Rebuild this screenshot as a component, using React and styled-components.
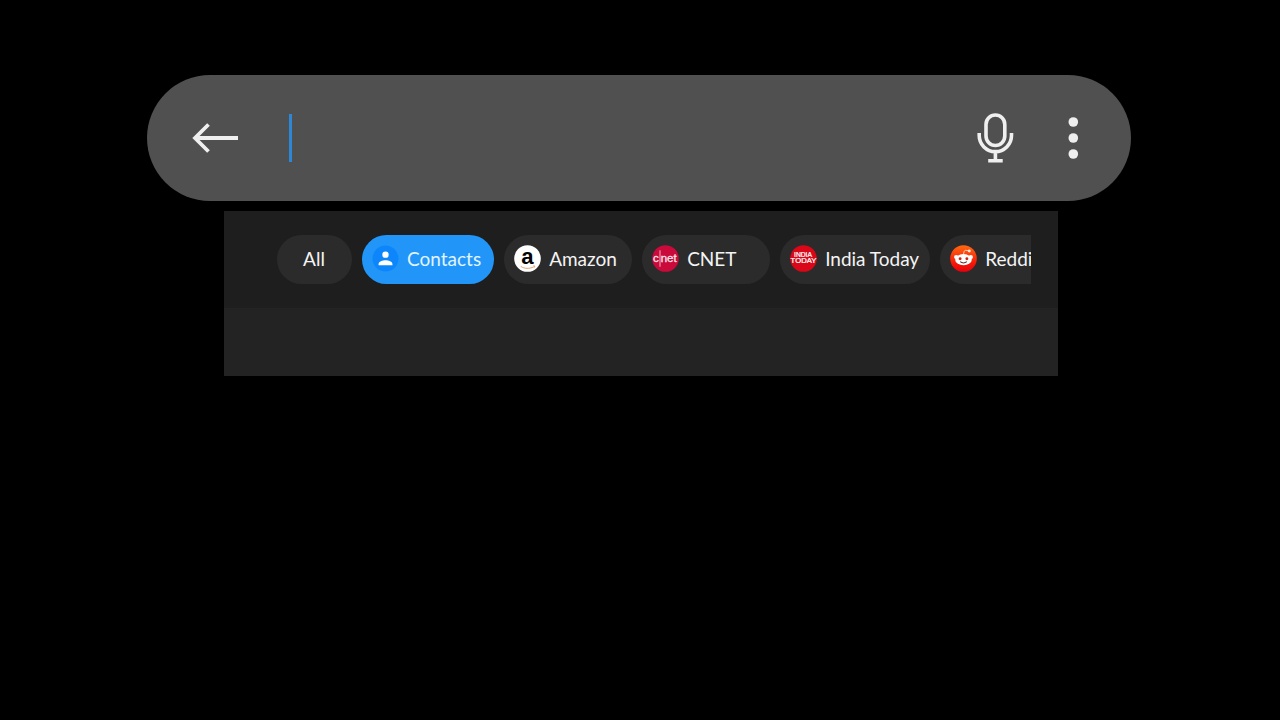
import React, { useState } from 'react';
import styled, { createGlobalStyle } from 'styled-components';

const GlobalStyle = createGlobalStyle`
  * {
    box-sizing: border-box;
  }

  body {
    margin: 0;
    background: #000;
    font-family: Lato, 'Liberation Sans', sans-serif;
  }
`;

const Page = styled.main`
  padding: 75px 0;
`;

const SearchBar = styled.form`
  display: flex;
  align-items: center;
  height: 126px;
  margin: 0 149px 10px 147px;
  padding: 0 52px 0 45px;
  border-radius: 63px;
  background: #505050;
`;

const IconButton = styled.button`
  display: flex;
  flex-shrink: 0;
  padding: 0;
  border: 0;
  background: transparent;
  color: #efefef;
  cursor: pointer;
`;

const Field = styled.label`
  display: flex;
  flex: 1;
  align-items: center;
  height: 48px;
  margin: 0 24px 0 49px;
`;

const Caret = styled.span`
  width: 3px;
  height: 48px;
  background: #2e86d6;
`;

const SearchInput = styled.input`
  flex: 1;
  min-width: 0;
  padding: 0 8px;
  border: 0;
  outline: 0;
  background: transparent;
  color: #efefef;
  caret-color: transparent;
  font: inherit;
  font-size: 32px;
`;

const Actions = styled.div`
  display: flex;
  align-items: center;
  gap: 53px;
`;

const Panel = styled.section`
  margin: 0 222px 0 224px;
  background: #232323;
`;

const Filters = styled.div`
  padding: 24px 27px 24px 53px;
  background: #1e1e1e;
`;

const ChipRow = styled.div`
  display: flex;
  gap: 10px;
  overflow: hidden;
`;

const Chip = styled.button`
  display: flex;
  flex-shrink: 0;
  align-items: center;
  justify-content: ${({ $plain }) => ($plain ? 'center' : 'flex-start')};
  gap: 8px;
  height: 49px;
  min-width: ${({ $plain }) => ($plain ? '75px' : '128px')};
  padding: 0 ${({ $active }) => ($active ? '13px' : '11px')} 2px 10px;
  border: 0;
  border-radius: 25px;
  background: ${({ $active }) => ($active ? '#2196f8' : '#2b2b2b')};
  color: ${({ $active }) => ($active ? '#e2f4ff' : '#f4f4f4')};
  font: inherit;
  font-size: 19px;
  line-height: 24px;
  white-space: nowrap;
  cursor: pointer;
`;

const Logo = styled.svg.attrs({ viewBox: '0 0 28 28', 'aria-hidden': true })`
  flex-shrink: 0;
  width: 27px;
  height: 27px;
  overflow: visible;
`;

const Results = styled.div`
  height: 68px;
`;

const BackIcon = () => (
  <svg width="48" height="32" viewBox="0 0 48 32" fill="none" stroke="currentColor" strokeWidth="3.8" aria-hidden="true">
    <path d="M46 16H3M16.5 2.5 3 16l13.500 13.500" />
  </svg>
);

const MicIcon = () => (
  <svg width="37" height="50" viewBox="0 0 37 50" fill="none" stroke="currentColor" strokeWidth="3.6" aria-hidden="true">
    <rect x="9" y="2" width="18.800" height="30.500" rx="9.400" />
    <path d="M2.200 20v2.500a16 16 0 0 0 32.300 0V20M18.400 38.500V47M11.200 47.800h14.500" />
  </svg>
);

const MoreIcon = () => (
  <svg width="12" height="44" viewBox="0 0 12 44" fill="currentColor" aria-hidden="true">
    <circle cx="6.300" cy="6" r="4.800" />
    <circle cx="6.300" cy="22" r="4.800" />
    <circle cx="6.300" cy="38" r="4.800" />
  </svg>
);

const ContactsLogo = () => (
  <Logo>
    <circle cx="14" cy="14" r="13.500" fill="#0d86fb" />
    <circle cx="14" cy="10" r="3.300" fill="#fff" />
    <path d="M6.800 21v-1.200c0-2.600 4.200-3.900 7.200-3.900s7.200 1.300 7.200 3.900V21z" fill="#fff" />
  </Logo>
);

const AmazonLogo = () => (
  <Logo>
    <circle cx="14" cy="14" r="13.800" fill="#fff" />
    <text x="14" y="20" textAnchor="middle" fontFamily="'Liberation Sans', sans-serif" fontWeight="700" fontSize="23" fill="#050505">a</text>
    <path d="M7 22.200c4 2.600 9 2.600 13.500 .5M20 21.600l1.600.2-.5 1.500" fill="none" stroke="#e0a064" strokeWidth="1" />
  </Logo>
);

const CnetLogo = () => (
  <Logo>
    <circle cx="14" cy="14" r="13.800" fill="#c90a3a" />
    <g fontFamily="'Liberation Sans', sans-serif" fontSize="12" fill="#fbe3ea" stroke="#fbe3ea" strokeWidth=".3">
      <text x="1" y="18">c</text>
      <text x="9" y="18">net</text>
    </g>
    <path d="M8.300 5.500v17" stroke="#f3b4c4" strokeWidth="1" />
  </Logo>
);

const IndiaTodayLogo = () => (
  <Logo>
    <circle cx="14" cy="14" r="13.800" fill="#d90718" />
    <g fontFamily="'Liberation Sans', sans-serif" textAnchor="middle" fill="#fff" stroke="#fff" strokeWidth=".25">
      <text x="13.500" y="12.500" fontSize="7">INDIA</text>
      <text x="14" y="19" fontSize="8">TODAY</text>
    </g>
  </Logo>
);

const RedditLogo = () => (
  <Logo>
    <defs>
      <linearGradient id="redditFill" x1="0" y1="0" x2="0" y2="1">
        <stop offset="0" stopColor="#ff6a10" />
        <stop offset=".7" stopColor="#f51508" />
        <stop offset="1" stopColor="#e8000c" />
      </linearGradient>
    </defs>
    <circle cx="14" cy="14" r="13.800" fill="url(#redditFill)" />
    <path d="M14 10.500c.2-3 .7-4.800 2-5l3 .4" fill="none" stroke="#ffd9c8" strokeWidth="1" />
    <circle cx="20" cy="6.200" r="1.500" fill="#ffe6dc" />
    <circle cx="6.400" cy="12.500" r="2.200" fill="#fff" />
    <circle cx="21.600" cy="12.500" r="2.200" fill="#fff" />
    <ellipse cx="14" cy="15.200" rx="8.600" ry="5.800" fill="#fff" />
    <circle cx="10.500" cy="14.300" r="1.500" fill="#d5200c" />
    <circle cx="17.500" cy="14.300" r="1.500" fill="#d5200c" />
    <path d="M10.500 17.300c2 1.500 5 1.500 7 0" fill="none" stroke="#5a2a24" strokeWidth="1.100" />
  </Logo>
);

const filters = [
  { name: 'All' },
  { name: 'Contacts', Icon: ContactsLogo },
  { name: 'Amazon', Icon: AmazonLogo },
  { name: 'CNET', Icon: CnetLogo },
  { name: 'India Today', Icon: IndiaTodayLogo },
  { name: 'Reddit', Icon: RedditLogo },
];

const App = () => {
  const [active, setActive] = useState('Contacts');
  const [query, setQuery] = useState('');

  return (
    <>
      <GlobalStyle />
      <Page>
        <SearchBar role="search" onSubmit={(e) => e.preventDefault()}>
          <IconButton type="button" aria-label="Back">
            <BackIcon />
          </IconButton>
          <Field>
            {!query && <Caret />}
            <SearchInput
              type="text"
              aria-label="Search"
              value={query}
              onChange={(e) => setQuery(e.target.value)}
            />
          </Field>
          <Actions>
            <IconButton type="button" aria-label="Voice search">
              <MicIcon />
            </IconButton>
            <IconButton type="button" aria-label="More options">
              <MoreIcon />
            </IconButton>
          </Actions>
        </SearchBar>

        <Panel>
          <Filters>
            <ChipRow>
              {filters.map(({ name, Icon }) => (
                <Chip
                  key={name}
                  type="button"
                  $plain={!Icon}
                  $active={active === name}
                  aria-pressed={active === name}
                  onClick={() => setActive(name)}
                >
                  {Icon && <Icon />}
                  {name}
                </Chip>
              ))}
            </ChipRow>
          </Filters>
          <Results />
        </Panel>
      </Page>
    </>
  );
};

export default App;
